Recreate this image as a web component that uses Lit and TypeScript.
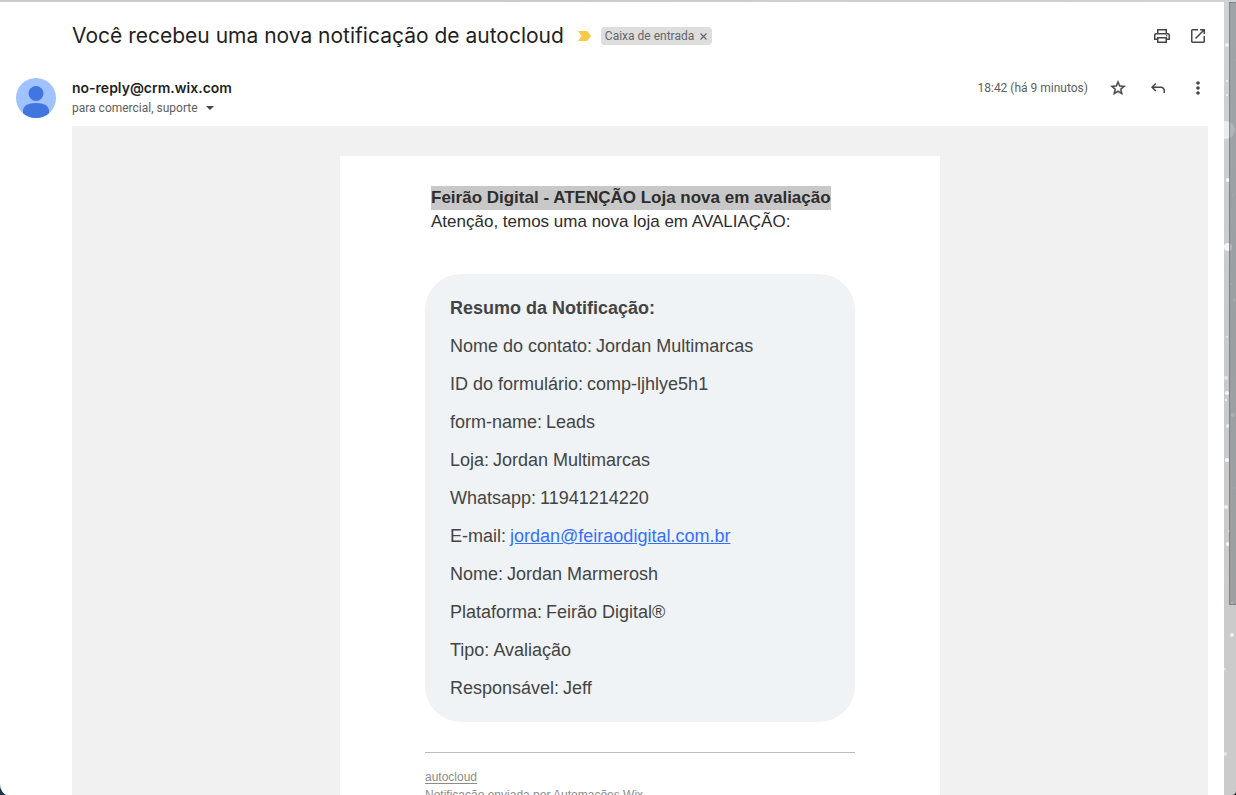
import { LitElement, html, css, svg } from "lit";
import { customElement, state } from "lit/decorators.js";

interface Field {
  label: string;
  value: string;
  mail?: boolean;
}

const FIELDS: Field[] = [
  { label: "Nome do contato", value: "Jordan Multimarcas" },
  { label: "ID do formulário", value: "comp-ljhlye5h1" },
  { label: "form-name", value: "Leads" },
  { label: "Loja", value: "Jordan Multimarcas" },
  { label: "Whatsapp", value: "11941214220" },
  { label: "E-mail", value: "jordan@feiraodigital.com.br", mail: true },
  { label: "Nome", value: "Jordan Marmerosh" },
  { label: "Plataforma", value: "Feirão Digital®" },
  { label: "Tipo", value: "Avaliação" },
  { label: "Responsável", value: "Jeff" },
];

// Snow specks of the wallpaper seen through the scroll track: x, y, radius, opacity.
const SPECKS: number[][] = [
  [3, 43, 2, 0.7], [3, 79, 1, 0.7], [3, 93, 1, 0.8], [2, 128, 9, 0.6], [11, 58, 1, 0.3],
  [4, 178, 2, 0.9], [9, 193, 1, 0.3], [4, 245, 4, 0.8], [7, 282, 1, 0.4], [10, 298, 1, 0.5],
  [3, 335, 1, 0.5], [2, 376, 2, 0.5], [3, 391, 2, 0.8], [2, 398, 1, 0.9], [9, 413, 2, 0.5],
  [4, 424, 2, 0.6], [3, 458, 2, 0.9], [10, 486, 1, 0.3], [2, 505, 2, 0.7], [5, 529, 1, 0.8],
  [4, 542, 2, 0.9], [8, 601, 1, 0.7], [8, 633, 2, 0.7], [1, 667, 1, 0.6], [1, 752, 2, 0.5],
];

@customElement("scroll-track")
class ScrollTrack extends LitElement {
  static styles = css`
    :host { display: grid; min-height: 0; }
    .snow, .thumb { grid-area: 1 / 1; }
    .snow { width: 12px; height: 100%; overflow: hidden; }
    .thumb {
      justify-self: end;
      width: 7px;
      height: 76%;
      box-sizing: border-box;
      border: 1px solid rgba(90, 94, 98, 0.45);
      border-right: 0;
      background: rgba(90, 94, 98, 0.4);
    }
  `;
  render() {
    return html`
      <svg class="snow" aria-hidden="true">
        ${SPECKS.map(([x, y, r, o]) => svg`<circle cx=${x} cy=${y} r=${r} fill="#fff" fill-opacity=${o}></circle>`)}
      </svg>
      <div class="thumb"></div>
    `;
  }
}

@customElement("mail-body")
class MailBody extends LitElement {
  static styles = css`
    :host {
      display: block;
      padding-top: 30px;
      background: #f1f1f1;
      font-family: "Liberation Sans", Arial, sans-serif;
    }
    .sheet {
      box-sizing: border-box;
      max-width: 600px;
      margin: 0 auto;
      padding: 30px 85px;
      background: #fff;
    }
    .intro { padding: 0 6px; margin-bottom: 40px; font-size: 17px; line-height: 24px; color: #2d2d2d; }
    .intro p { margin: 0; }
    .marked { display: inline-block; background: #c8c8c8; }
    .panel {
      padding: 15px 25px;
      border-radius: 36px;
      background: #eff3f6;
      font-size: 18px;
      line-height: 38px;
      color: #444;
    }
    h2 { margin: 0; font-size: inherit; font-weight: bold; }
    dl { margin: 0; }
    .row { display: flex; gap: 4px; }
    dd { margin: 0; }
    .row a { color: #3370fb; }
    .foot {
      margin-top: 30px;
      padding-top: 15px;
      border-top: 1px solid #b9bcc6;
      font-size: 12px;
      line-height: 18px;
      color: #8b8b8b;
    }
    .foot p { margin: 0; }
    .foot a { color: inherit; text-underline-offset: 2px; }
  `;
  render() {
    return html`
      <article class="sheet">
        <div class="intro">
          <strong class="marked">Feirão Digital - ATENÇÃO Loja nova em avaliação</strong>
          <p>Atenção, temos uma nova loja em AVALIAÇÃO:</p>
        </div>
        <section class="panel">
          <h2>Resumo da Notificação:</h2>
          <dl>
            ${FIELDS.map((f) => html`
              <div class="row">
                <dt>${f.label}:</dt>
                <dd>${f.mail ? html`<a href="mailto:${f.value}">${f.value}</a>` : f.value}</dd>
              </div>`)}
          </dl>
        </section>
        <footer class="foot">
          <a href="#autocloud">autocloud</a>
          <p>Notificação enviada por Automações Wix</p>
        </footer>
      </article>
    `;
  }
}

@customElement("app-root")
class AppRoot extends LitElement {
  @state() private starred = false;
  @state() private labelled = true;

  static styles = css`
    :host {
      display: block;
      height: 100vh;
      overflow: hidden;
      background: linear-gradient(90deg, #17344d 50%, #0a0a0a 50%);
      font-family: Inter, "Open Sans", sans-serif;
      color: #1f1f1f;
    }
    .window {
      box-sizing: border-box;
      height: 100%;
      padding-top: 2px;
      display: grid;
      grid-template-columns: minmax(0, 1fr) 12px;
      grid-template-rows: minmax(0, 1fr);
      overflow: hidden;
      border-radius: 0 0 4px 8px / 0 0 4px 12px;
      background:
        linear-gradient(90deg, #cbcbcb 40%, #ced3d7) top / 100% 2px no-repeat,
        linear-gradient(#cdd3d7, #c5cace 40%, #cbcbcb 78%);
    }
    .pane { background: #fff; overflow: hidden; padding-right: 16px; }
    button {
      display: grid;
      place-items: center;
      padding: 0;
      border: 0;
      background: none;
      color: #444746;
      font: inherit;
      cursor: pointer;
    }
    .tool { width: 20px; height: 20px; }
    .subject { display: flex; align-items: center; height: 68px; padding-left: 72px; }
    h1 { margin: 0; font-size: 21px; line-height: 28px; font-weight: 400; }
    .marker { margin-left: 14px; }
    .chip {
      display: flex;
      align-items: center;
      gap: 5px;
      height: 18px;
      margin-left: 9px;
      padding: 0 5px 0 4px;
      border-radius: 4px;
      background: #ddd;
      color: #666;
      font-family: Roboto, sans-serif;
      font-size: 12px;
    }
    .chip button { width: 8px; height: 18px; color: #666; }
    .tools { display: flex; margin-left: auto; gap: 16px; }
    .sender { display: flex; height: 56px; padding-left: 16px; }
    .avatar { margin: 8px 16px 0 0; }
    .who { padding-top: 8px; }
    .from { font-size: 14px; line-height: 20px; font-weight: 600; }
    .to { display: flex; align-items: center; height: 20px; gap: 8px; font-family: Roboto, sans-serif; font-size: 12px; color: #5e5e5e; }
    .meta { display: flex; align-items: center; height: 20px; margin: 8px 0 0 auto; gap: 20px; font-family: Roboto, sans-serif; font-size: 12px; color: #5e5e5e; }
    .body { display: block; margin-left: 72px; }
  `;

  render() {
    return html`
      <div class="window">
        <main class="pane">
          <header class="subject">
            <h1>Você recebeu uma nova notificação de autocloud</h1>
            <svg class="marker" width="14" height="10" viewBox="0 0 14 10" aria-hidden="true">
              <path d="M0 0h8.600Q9.400 0 9.900.7L13 5 9.900 9.300Q9.400 10 8.600 10H0L3.600 5z" fill="#f7c945"></path>
            </svg>
            ${this.labelled ? html`
              <span class="chip">Caixa de entrada
                <button aria-label="Remover marcador" @click=${() => (this.labelled = false)}>
                  <svg width="7" height="7" viewBox="0 0 7 7"><path d="M.5.5l6 6M6.500.5l-6 6" stroke="currentColor" stroke-width="1.200"></path></svg>
                </button>
              </span>` : ""}
            <div class="tools">
              <button class="tool" aria-label="Imprimir">
                <svg width="20" height="20" viewBox="0 -960 960 960" fill="currentColor"><path d="M648-624v-120H312v120h-72v-192h480v192h-72Zm-480 72h624-624Zm539.790 96q15.210 0 25.710-10.290t10.500-25.500q0-15.210-10.290-25.710t-25.500-10.500q-15.210 0-25.710 10.290t-10.500 25.500q0 15.210 10.290 25.710t25.500 10.500ZM648-216v-144H312v144h336Zm72 72H240v-144H96v-240q0-40 28-68t68-28h576q40 0 68 28t28 68v240H720v144Zm72-216v-168q0-10.200-6.900-17.100-6.900-6.900-17.100-6.900H192q-10.200 0-17.100 6.900-6.900 6.900-6.900 17.100v168h72v-72h480v72h72Z"></path></svg>
              </button>
              <button class="tool" aria-label="Em nova janela">
                <svg width="20" height="20" viewBox="0 -960 960 960" fill="currentColor"><path d="M216-144q-29.700 0-50.850-21.150Q144-186.300 144-216v-528q0-29.700 21.150-50.850Q186.300-816 216-816h264v72H216v528h528v-264h72v264q0 29.700-21.150 50.850Q773.700-144 744-144H216Zm171-192-51-51 357-357H576v-72h240v240h-72v-117L387-336Z"></path></svg>
              </button>
            </div>
          </header>
          <section class="sender">
            <svg class="avatar" width="40" height="40" viewBox="0 0 40 40" aria-hidden="true">
              <clipPath id="disc"><circle cx="20" cy="20" r="20"></circle></clipPath>
              <g clip-path="url(#disc)">
                <rect width="40" height="40" fill="#a0c2ff"></rect>
                <circle cx="20" cy="15.500" r="7.500" fill="#4175df"></circle>
                <path d="M7 40V32.500C7 28 12 25 20 25s13 3 13 7.500V40z" fill="#4175df"></path>
              </g>
            </svg>
            <div class="who">
              <div class="from">no-reply@crm.wix.com</div>
              <div class="to">para comercial, suporte
                <button aria-label="Mostrar detalhes"><svg width="8" height="4" viewBox="0 0 8 4"><path d="M0 0h8L4 4z" fill="currentColor"></path></svg></button>
              </div>
            </div>
            <div class="meta">
              <time>18:42 (há 9 minutos)</time>
              <button class="tool" aria-label="Com estrela" aria-pressed=${this.starred} @click=${() => (this.starred = !this.starred)}>
                <svg width="18" height="18" viewBox="0 0 24 24" fill="currentColor"><path d="M22 9.240l-7.190-.62L12 2 9.190 8.630 2 9.240l5.460 4.730L5.820 21 12 17.270 18.180 21l-1.630-7.030L22 9.240zM12 15.400l-3.760 2.270 1-4.280-3.320-2.880 4.380-.38L12 6.100l1.710 4.040 4.380.38-3.320 2.880 1 4.280L12 15.400z" stroke="currentColor" stroke-width=".5"></path></svg>
              </button>
              <button class="tool" aria-label="Responder">
                <svg width="20" height="20" viewBox="0 -960 960 960" fill="currentColor"><path d="M744-240v-120q0-50-35-85t-85-35H282l118 118-51 51-205-205 205-205 51 51-118 118h342q80 0 136 56t56 136v120h-72Z"></path></svg>
              </button>
              <button class="tool" aria-label="Mais">
                <svg width="20" height="20" viewBox="0 0 20 20" fill="currentColor"><circle cx="10" cy="5" r="1.800"></circle><circle cx="10" cy="10" r="1.800"></circle><circle cx="10" cy="15" r="1.800"></circle></svg>
              </button>
            </div>
          </section>
          <mail-body class="body"></mail-body>
        </main>
        <scroll-track></scroll-track>
      </div>
    `;
  }
}
